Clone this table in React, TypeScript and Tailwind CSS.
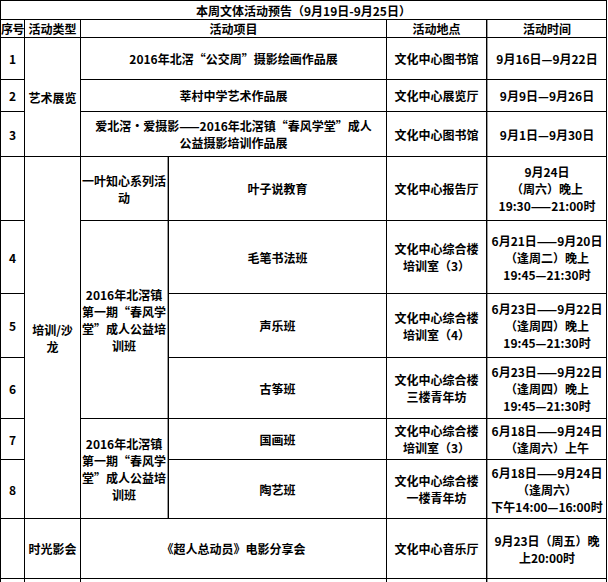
import React from "react";

type CellProps = {
  className?: string;
  children?: React.ReactNode;
};

function Cell({ className = "", children }: CellProps) {
  return (
    <div
      className={`flex items-center justify-center bg-white text-center leading-[17px] ${className}`}
    >
      <div>{children}</div>
    </div>
  );
}

const head = "bg-[#9fc5e8]";
const timeCell = "border-l border-[#9a9a9a]";

export default function App() {
  return (
    <div className="min-h-screen bg-white">
      <div
        className="grid w-[607px] gap-px bg-black p-px text-[12px] font-semibold text-black"
        style={{ fontFamily: '"Noto Sans CJK SC", "Liberation Sans", sans-serif' }}
      >
        <div className="grid grid-cols-[23px_55px_87px_217px_99px_119px] grid-rows-[18px_17px_41px_31px_44px_63px_72px_63px_60px_40px_58px_59px_20px] gap-px bg-black">
          {/* title */}
          <Cell className="col-span-6">本周文体活动预告（9月19日-9月25日）</Cell>

          {/* header */}
          <Cell className={`whitespace-nowrap tracking-[-0.5px] ${head}`}>序号</Cell>
          <Cell className={head}>活动类型</Cell>
          <Cell className={`col-span-2 ${head}`}>活动项目</Cell>
          <Cell className={head}>活动地点</Cell>
          <Cell className={`${head} ${timeCell}`}>活动时间</Cell>

          {/* 艺术展览 */}
          <Cell>1</Cell>
          <Cell className="row-span-3">艺术展览</Cell>
          <Cell className="col-span-2">2016年北滘“公交周”摄影绘画作品展</Cell>
          <Cell>文化中心图书馆</Cell>
          <Cell className={timeCell}>9月16日—9月22日</Cell>

          <Cell>2</Cell>
          <Cell className="col-span-2">莘村中学艺术作品展</Cell>
          <Cell>文化中心展览厅</Cell>
          <Cell className={timeCell}>9月9日—9月26日</Cell>

          <Cell>3</Cell>
          <Cell className="col-span-2">
            爱北滘·爱摄影——2016年北滘镇“春风学堂”成人
            <br />
            公益摄影培训作品展
          </Cell>
          <Cell>文化中心图书馆</Cell>
          <Cell className={timeCell}>9月1日—9月30日</Cell>

          {/* 培训/沙龙 */}
          <Cell></Cell>
          <Cell className="row-span-6">
            培训/沙
            <br />
            龙
          </Cell>
          <Cell className="border-r border-[#9a9a9a]">
            一叶知心系列活
            <br />
            动
          </Cell>
          <Cell>叶子说教育</Cell>
          <Cell>文化中心报告厅</Cell>
          <Cell className={timeCell}>
            9月24日
            <br />
            （周六）晚上
            <br />
            19:30——21:00时
          </Cell>

          <Cell>4</Cell>
          <Cell className="row-span-3 border-r border-[#9a9a9a]">
            2016年北滘镇
            <br />
            第一期“春风学
            <br />
            堂”成人公益培
            <br />
            训班
          </Cell>
          <Cell>毛笔书法班</Cell>
          <Cell>
            文化中心综合楼
            <br />
            培训室（3）
          </Cell>
          <Cell className={timeCell}>
            6月21日——9月20日
            <br />
            （逢周二）晚上
            <br />
            19:45—21:30时
          </Cell>

          <Cell>5</Cell>
          <Cell>声乐班</Cell>
          <Cell>
            文化中心综合楼
            <br />
            培训室（4）
          </Cell>
          <Cell className={timeCell}>
            6月23日——9月22日
            <br />
            （逢周四）晚上
            <br />
            19:45—21:30时
          </Cell>

          <Cell>6</Cell>
          <Cell>古筝班</Cell>
          <Cell>
            文化中心综合楼
            <br />
            三楼青年坊
          </Cell>
          <Cell className={timeCell}>
            6月23日——9月22日
            <br />
            （逢周四）晚上
            <br />
            19:45—21:30时
          </Cell>

          <Cell>7</Cell>
          <Cell className="row-span-2 border-r border-[#9a9a9a]">
            2016年北滘镇
            <br />
            第一期“春风学
            <br />
            堂”成人公益培
            <br />
            训班
          </Cell>
          <Cell>国画班</Cell>
          <Cell>
            文化中心综合楼
            <br />
            培训室（3）
          </Cell>
          <Cell className={timeCell}>
            6月18日——9月24日
            <br />
            （逢周六）上午
          </Cell>

          <Cell>8</Cell>
          <Cell>陶艺班</Cell>
          <Cell>
            文化中心综合楼
            <br />
            一楼青年坊
          </Cell>
          <Cell className={timeCell}>
            6月18日——9月24日
            <br />
            （逢周六）
            <br />
            下午14:00—16:00时
          </Cell>

          {/* 时光影会 */}
          <Cell></Cell>
          <Cell>时光影会</Cell>
          <Cell className="col-span-2">《超人总动员》电影分享会</Cell>
          <Cell>文化中心音乐厅</Cell>
          <Cell className={timeCell}>
            9月23日（周五）晚
            <br />
            上20:00时
          </Cell>

          <Cell></Cell>
          <Cell></Cell>
          <Cell className="col-span-2"></Cell>
          <Cell></Cell>
          <Cell className={timeCell}></Cell>
        </div>
      </div>
    </div>
  );
}
